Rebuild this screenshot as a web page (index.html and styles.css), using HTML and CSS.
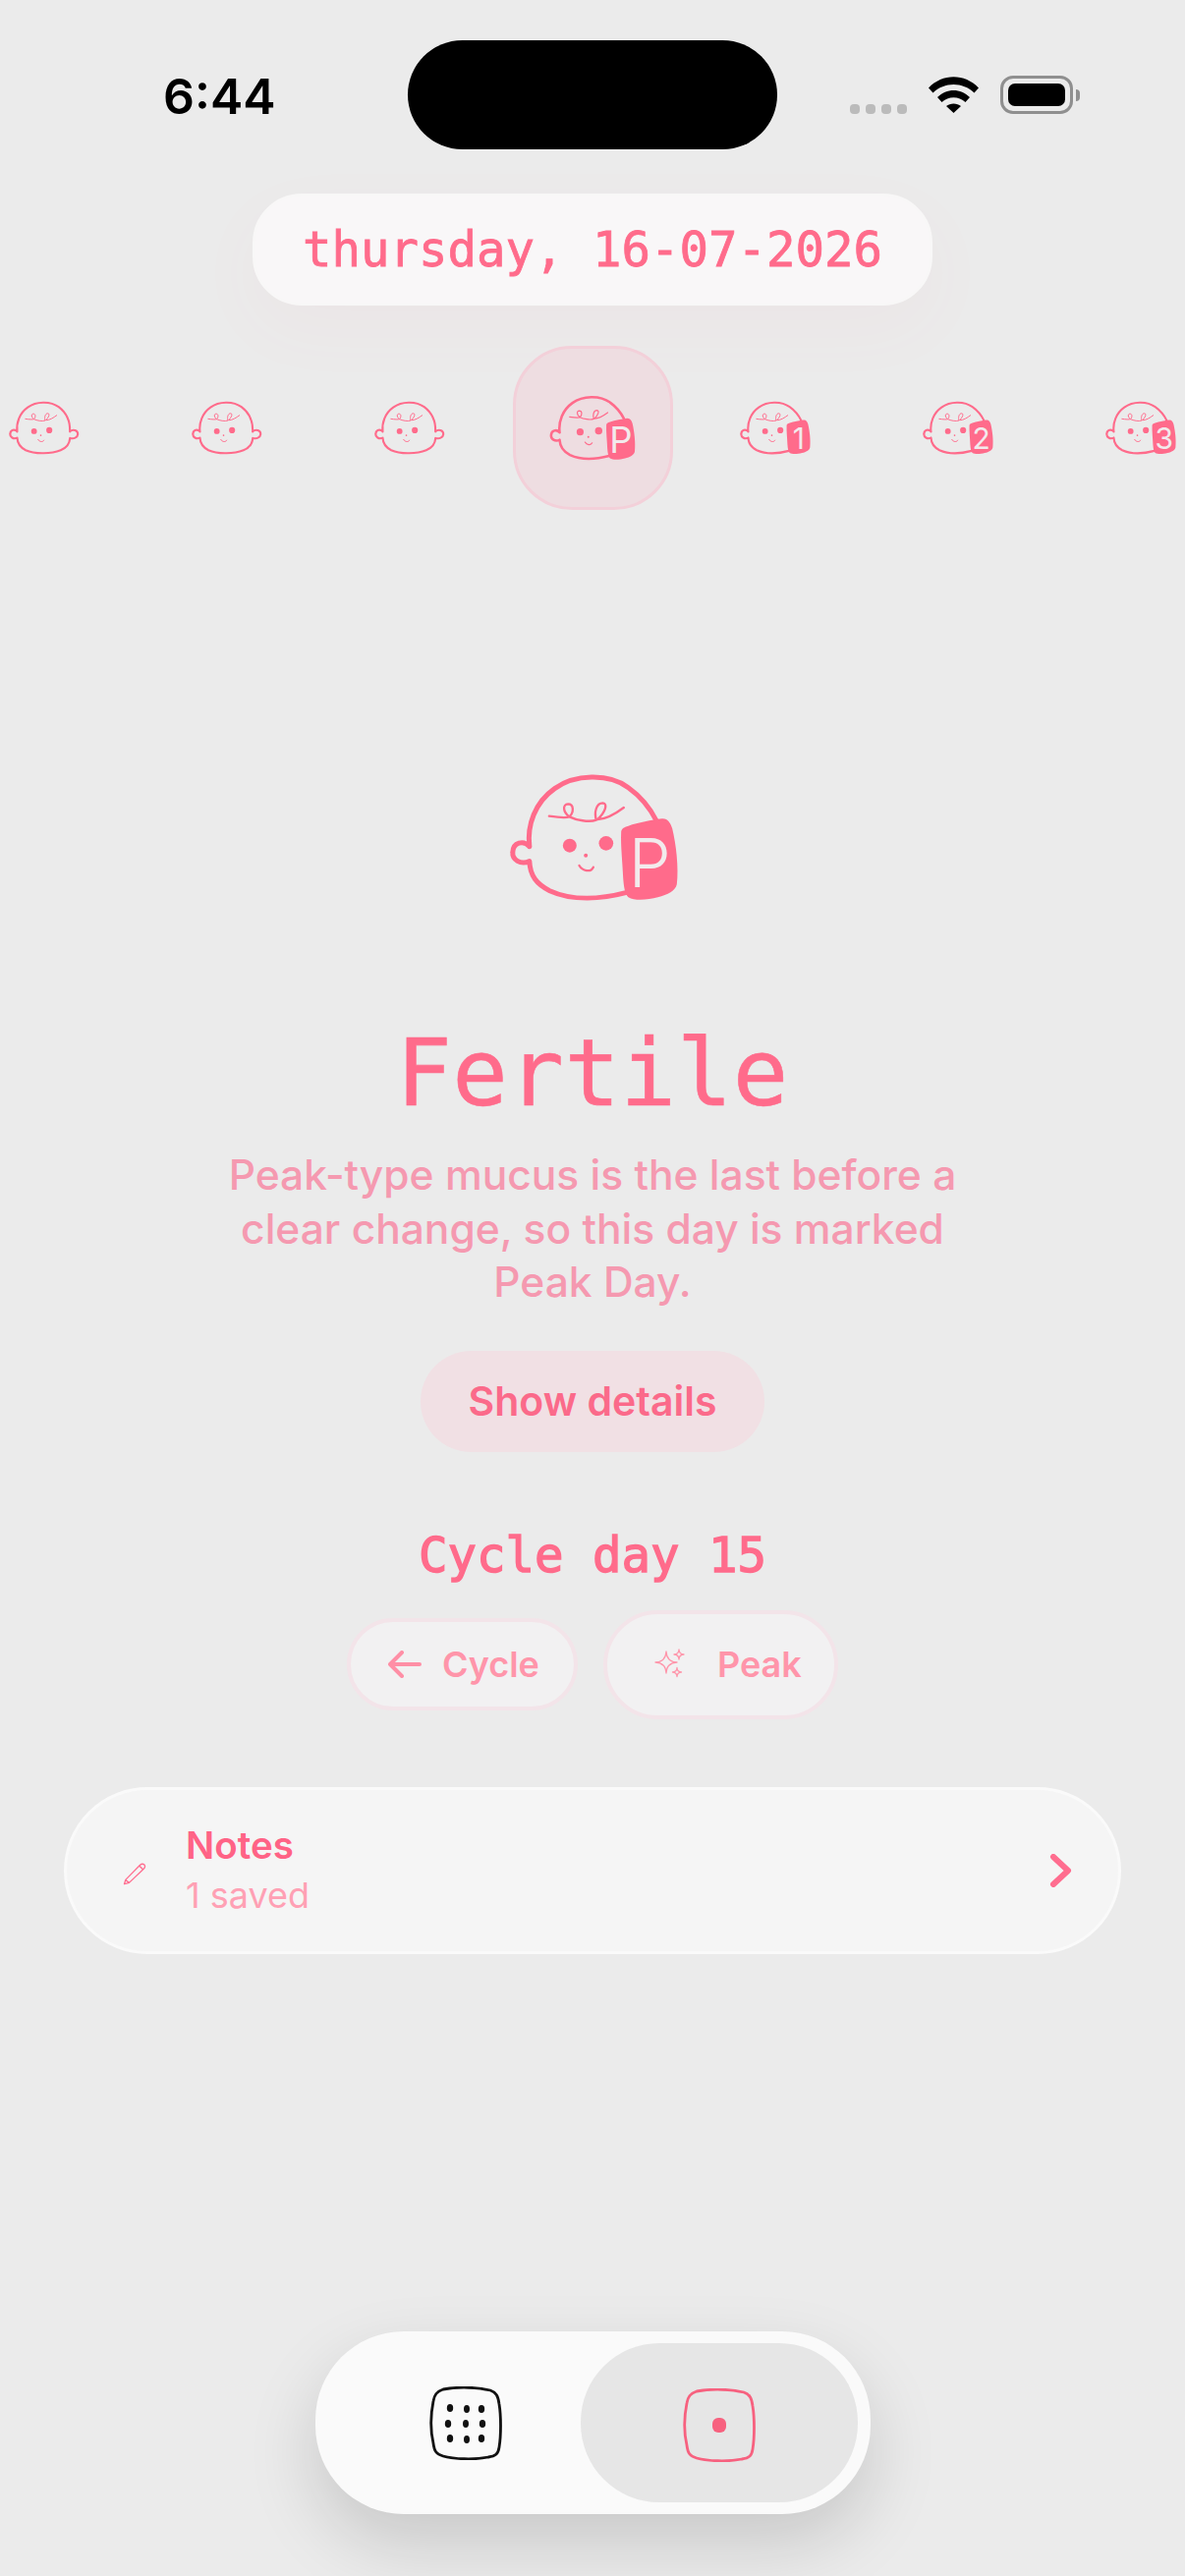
FILE: index.html
```html
<!DOCTYPE html>
<html lang="en">

<head>
	<meta charset="utf-8">
	<title>Cycle day</title>
	<link rel="stylesheet" href="styles.css">
</head>

<body>
	<svg class="defs" width="0" height="0">
		<defs>
			<!-- face is shared by both heads -->
			<g id="face">
				<circle class="fill" cx="271" cy="302" r="21" />
				<circle class="fill" cx="382" cy="295" r="22" />
				<circle class="fill" cx="320" cy="332" r="6" />
				<path class="thin" d="M300 363C310 380 335 385 343 368" />
				<path class="thin" d="M208 212C236 216 260 218 270 214C250 200 248 176 266 175C284 175 284 200 270 214C290 224 330 232 352 224C345 200 352 172 372 172C388 174 380 200 356 222C385 222 412 204 436 186" />
			</g>
			<g id="head-plain">
				<path class="line" d="M148 305C140 240 165 170 225 128C285 84 390 80 450 125C510 170 535 240 532 305M532 305C555 282 592 296 590 325C588 348 560 360 533 352C530 395 505 425 465 440C400 466 280 472 210 440C170 420 150 395 148 350C120 362 95 345 97 322C98 292 130 284 148 305" />
				<use href="#face" />
			</g>
			<g id="head-badge">
				<path class="line" d="M148 305C140 240 165 170 225 128C285 84 390 80 450 125C485 150 515 185 535 225M148 350C150 395 170 420 210 440C280 472 370 465 445 445M148 305C130 284 98 292 97 322C95 345 120 362 148 350" />
				<use href="#face" />
				<path class="fill" d="M428 262C428 250 436 246 450 242C480 232 520 224 552 220C570 218 578 232 584 250C596 300 604 370 598 420C594 440 570 452 540 460C510 468 470 472 450 460C440 452 436 430 434 400C432 350 426 300 428 262Z" />
			</g>
		</defs>
	</svg>

	<div class="screen">
		<div class="status-bar">
			<div class="status-time">6:44</div>
			<div class="island"></div>
			<div class="status-icons">
				<div class="signal">
					<span></span><span></span><span></span><span></span>
				</div>
				<svg class="wifi" viewBox="0 0 51 37">
					<path d="M0 11.500C14 -3.500 37 -3.500 51 11.500L46.500 16.500C35 5 16 5 4.500 16.500Z" />
					<path d="M9 21C18.500 11.500 32.500 11.500 42 21L37.500 26C31 19.500 20 19.500 13.500 26Z" />
					<path d="M18 30C22 26.500 29 26.500 33 30L25.500 37Z" />
				</svg>
				<div class="battery">
					<div class="battery-fill"></div>
				</div>
				<div class="battery-nub"></div>
			</div>
		</div>

		<div class="date-pill">thursday, 16-07-2026</div>

		<div class="day-strip">
			<div class="day">
				<svg class="baby-small" viewBox="80 75 530 405"><use href="#head-plain" /></svg>
			</div>
			<div class="day">
				<svg class="baby-small" viewBox="80 75 530 405"><use href="#head-plain" /></svg>
			</div>
			<div class="day">
				<svg class="baby-small" viewBox="80 75 530 405"><use href="#head-plain" /></svg>
			</div>
			<div class="day day-active">
				<svg class="baby-mid" viewBox="80 75 530 405">
					<use href="#head-badge" />
					<text class="badge-text" x="515" y="430">P</text>
				</svg>
			</div>
			<div class="day">
				<svg class="baby-small" viewBox="80 75 530 405">
					<use href="#head-badge" />
					<text class="badge-text" x="515" y="432">1</text>
				</svg>
			</div>
			<div class="day">
				<svg class="baby-small" viewBox="80 75 530 405">
					<use href="#head-badge" />
					<text class="badge-text" x="515" y="432">2</text>
				</svg>
			</div>
			<div class="day">
				<svg class="baby-small" viewBox="80 75 530 405">
					<use href="#head-badge" />
					<text class="badge-text" x="515" y="432">3</text>
				</svg>
			</div>
		</div>

		<svg class="baby-big" viewBox="80 75 530 405">
			<use href="#head-badge" />
			<text class="badge-text" x="515" y="430">P</text>
		</svg>

		<h1 class="title">Fertile</h1>
		<p class="summary">Peak-type mucus is the last before a clear change, so this day is marked Peak Day.</p>
		<div class="details-btn">Show details</div>

		<div class="cycle-day">Cycle day 15</div>

		<div class="chips">
			<div class="chip chip-cycle">
				<svg class="arrow" viewBox="0 0 34 28">
					<path d="M14 2L2 14L14 26M2 14H32" />
				</svg>
				<span>Cycle</span>
			</div>
			<div class="chip chip-peak">
				<svg class="sparkles" viewBox="0 0 34 34">
					<path d="M14 4Q14.500 14.500 25 15Q14.500 15.500 14 26Q13.500 15.500 3 15Q13.500 14.500 14 4Z" />
					<path d="M27 2Q27.200 6.800 32 7Q27.200 7.200 27 12Q26.800 7.200 22 7Q26.800 6.800 27 2Z" />
					<path d="M25 20.500Q25.200 24.800 29.500 25Q25.200 25.200 25 29.500Q24.800 25.200 20.500 25Q24.800 24.800 25 20.500Z" />
				</svg>
				<span>Peak</span>
			</div>
		</div>

		<div class="notes-card">
			<svg class="pencil" viewBox="255 278 72 70">
				<path d="M259 344L263 331L308 285Q315 279 321 284Q326 291 319 297L274 340ZM263 331L274 340M306 288L316 298" />
			</svg>
			<div class="notes-text">
				<div class="notes-title">Notes</div>
				<div class="notes-sub">1 saved</div>
			</div>
			<svg class="chevron" viewBox="0 0 24 34">
				<path d="M4 3L19 17L4 31" />
			</svg>
		</div>

		<div class="tab-bar">
			<div class="tab tab-grid">
				<svg class="tab-icon" viewBox="0 0 74 75">
					<path class="squircle" d="M14 3C30 0 50 1 62 4C68 6 70 10 71 18C73 30 73 50 71 62C70 69 67 71 60 72C45 75 25 74 14 71C7 69 5 66 4 58C1 45 1 30 4 15C5 8 8 5 14 3Z" />
					<ellipse cx="21" cy="22" rx="3.200" ry="4" />
					<ellipse cx="38" cy="23" rx="3" ry="4" />
					<ellipse cx="53" cy="23" rx="3.200" ry="4" />
					<ellipse cx="19" cy="38" rx="3.200" ry="4" />
					<ellipse cx="37" cy="38" rx="3" ry="4" />
					<ellipse cx="54" cy="38" rx="3.200" ry="4" />
					<ellipse cx="21" cy="53" rx="3.200" ry="4" />
					<ellipse cx="38" cy="54" rx="3" ry="4" />
					<ellipse cx="53" cy="53" rx="3.200" ry="4" />
				</svg>
			</div>
			<div class="tab tab-active">
				<svg class="tab-icon tab-icon-active" viewBox="0 0 74 75">
					<path class="squircle" d="M14 3C30 0 50 1 62 4C68 6 70 10 71 18C73 30 73 50 71 62C70 69 67 71 60 72C45 75 25 74 14 71C7 69 5 66 4 58C1 45 1 30 4 15C5 8 8 5 14 3Z" />
					<rect x="30" y="30" width="14" height="15" rx="6" />
				</svg>
			</div>
		</div>
	</div>
</body>

</html>
```

FILE: styles.css
```css
/* common css */
* {
	margin: 0;
	padding: 0;
	box-sizing: border-box;
}

body {
	font-family: 'Inter', 'Liberation Sans', sans-serif;
	background-color: #EBEBEB;
	width: 1206px;
	overflow: hidden;
}

.defs {
	position: absolute;
}

.screen {
	height: 2622px;
	display: flex;
	flex-direction: column;
	align-items: center;
}

/* status bar */
.status-bar {
	width: 100%;
	display: grid;
	grid-template-columns: 415px 376px 1fr;
	align-items: center;
	padding-top: 41px;
}

.status-time {
	padding-left: 166px;
	font-size: 50px;
	font-weight: 600;
	line-height: 60px;
	margin-top: 2px;
	color: #000;
}

.island {
	height: 111px;
	background-color: #000;
	border-radius: 56px;
}

.status-icons {
	display: flex;
	align-items: center;
	padding-left: 74px;
}

.signal {
	display: flex;
	gap: 6px;
	margin-top: 28px;
}

.signal span {
	width: 10px;
	height: 10px;
	border-radius: 4px;
	background-color: #BBB;
}

.wifi {
	width: 51px;
	height: 37px;
	margin-left: 22px;
}

.battery {
	width: 74px;
	height: 39px;
	margin-left: 22px;
	padding: 5px;
	border: 3px solid #8F8F8F;
	border-radius: 13px;
}

.battery-fill {
	height: 100%;
	background-color: #000;
	border-radius: 7px;
}

.battery-nub {
	width: 4px;
	height: 12px;
	margin-left: 3px;
	background-color: #8F8F8F;
	border-radius: 0 4px 4px 0;
}

/* date */
.date-pill {
	width: 692px;
	height: 114px;
	margin-top: 45px;
	display: flex;
	align-items: center;
	justify-content: center;
	background-color: #F9F7F8;
	border: 3px solid #F8F7F7;
	border-radius: 50px;
	box-shadow: 0 24px 70px rgba(255, 107, 139, 0.04);
	font-family: 'DejaVu Sans Mono', monospace;
	font-size: 49px;
	-webkit-text-stroke: 0.8px #FF6B8B;
	color: #FF6B8B;
}

/* day strip */
.day-strip {
	display: flex;
	justify-content: center;
	gap: 23px;
	margin-top: 41px;
	width: 100%;
}

.day {
	flex: 0 0 163px;
	height: 167px;
	display: flex;
	align-items: center;
	justify-content: center;
	border: 3px solid transparent;
	border-radius: 60px;
}

.day-active {
	background-color: #EEDDE1;
	border-color: #F3D0D9;
}

.baby-small {
	width: 74px;
	height: 57px;
}

.baby-mid {
	width: 90px;
	height: 69px;
}

.baby-big {
	width: 177px;
	height: 135px;
	margin-top: 266px;
	margin-left: 3px;
}

.line {
	fill: none;
	stroke: #FF6B8B;
	stroke-width: 15;
	stroke-linecap: round;
	stroke-linejoin: round;
}

.baby-small .line {
	stroke-width: 19;
}

.baby-mid .line {
	stroke-width: 18;
}

.thin {
	fill: none;
	stroke: #FF6B8B;
	stroke-width: 7;
	stroke-linecap: round;
	stroke-linejoin: round;
}

.baby-small .thin,
.baby-mid .thin {
	stroke-width: 9;
}

.fill {
	fill: #FF6B8B;
}

.badge-text {
	font-family: 'Inter', sans-serif;
	font-size: 215px;
	font-weight: 400;
	text-anchor: middle;
	fill: #F2EAEC;
}

.baby-big .badge-text {
	font-size: 205px;
	font-weight: 300;
}

/* main text */
.title {
	margin-top: 113px;
	font-family: 'DejaVu Sans Mono', monospace;
	font-size: 94px;
	font-weight: 400;
	line-height: 120px;
	letter-spacing: 0.5px;
	-webkit-text-stroke: 0.6px #FF6B8B;
	color: #FF6B8B;
}

.summary {
	width: 790px;
	margin-top: 16px;
	font-size: 42.500px;
	font-weight: 500;
	line-height: 54.500px;
	text-align: center;
	color: #F599B0;
}

.details-btn {
	width: 350px;
	height: 103px;
	margin-top: 42px;
	display: flex;
	align-items: center;
	justify-content: center;
	background-color: #F1E0E4;
	border-radius: 52px;
	font-size: 41px;
	font-weight: 600;
	color: #FB6A8A;
}

.cycle-day {
	margin-top: 76px;
	font-family: 'DejaVu Sans Mono', monospace;
	font-size: 49px;
	line-height: 60px;
	-webkit-text-stroke: 1.4px #FF6B8B;
	color: #FF6B8B;
}

/* chips */
.chips {
	display: flex;
	align-items: center;
	gap: 26px;
	margin-top: 25px;
}

.chip {
	display: flex;
	align-items: center;
	background-color: #F2F1F2;
	border: 4px solid #F3E4E9;
	font-size: 36px;
	font-weight: 600;
	color: #FF95AA;
}

.chip-cycle {
	width: 235px;
	height: 94px;
	padding-left: 38px;
	gap: 21px;
	border-radius: 47px;
}

.chip-peak {
	width: 239px;
	height: 111px;
	padding-left: 46px;
	gap: 32px;
	border-radius: 56px;
}

.arrow {
	width: 34px;
	height: 28px;
	fill: none;
	stroke: #FF8FA6;
	stroke-width: 4;
	stroke-linecap: round;
	stroke-linejoin: round;
}

.sparkles {
	width: 34px;
	height: 34px;
	fill: none;
	stroke: #FF95AA;
	stroke-width: 1.300;
	stroke-linejoin: round;
}

/* notes */
.notes-card {
	width: 1076px;
	height: 170px;
	margin-top: 69px;
	display: flex;
	align-items: center;
	padding: 0 46px 0 57px;
	background-color: #F5F5F5;
	border: 3px solid #FAFAFA;
	border-radius: 85px;
}

.pencil {
	width: 24px;
	height: 23px;
	margin-top: 8px;
	fill: none;
	stroke: #FF6D8F;
	stroke-width: 4;
	stroke-linejoin: round;
}

.notes-text {
	flex: 1;
	margin-left: 40px;
}

.notes-title {
	font-size: 38.500px;
	font-weight: 600;
	line-height: 50px;
	color: #FF6386;
}

.notes-sub {
	font-size: 36px;
	line-height: 52px;
	color: #FFA0B4;
}

.chevron {
	width: 24px;
	height: 34px;
	fill: none;
	stroke: #FF6D8F;
	stroke-width: 6;
	stroke-linecap: round;
	stroke-linejoin: round;
}

/* tab bar */
.tab-bar {
	width: 565px;
	height: 186px;
	margin-top: auto;
	margin-bottom: 63px;
	display: flex;
	padding: 12px 13px 12px 12px;
	background-color: #FAFAFA;
	border-radius: 90px;
	box-shadow: 0 30px 70px rgba(0, 0, 0, 0.15);
}

.tab {
	flex: 1;
	display: flex;
	align-items: center;
	justify-content: center;
}

.tab-grid {
	padding-left: 24px;
}

.tab-active {
	flex: 0 0 282px;
	background-color: #E6E6E6;
	border-radius: 80px;
}

.tab-icon {
	width: 74px;
	height: 75px;
	fill: #111;
}

.tab-icon .squircle {
	fill: none;
	stroke: #111;
	stroke-width: 2.800;
}

.tab-icon-active {
	margin-top: 4px;
	fill: #F7617F;
}

.tab-icon-active .squircle {
	stroke: #F7617F;
}
```
